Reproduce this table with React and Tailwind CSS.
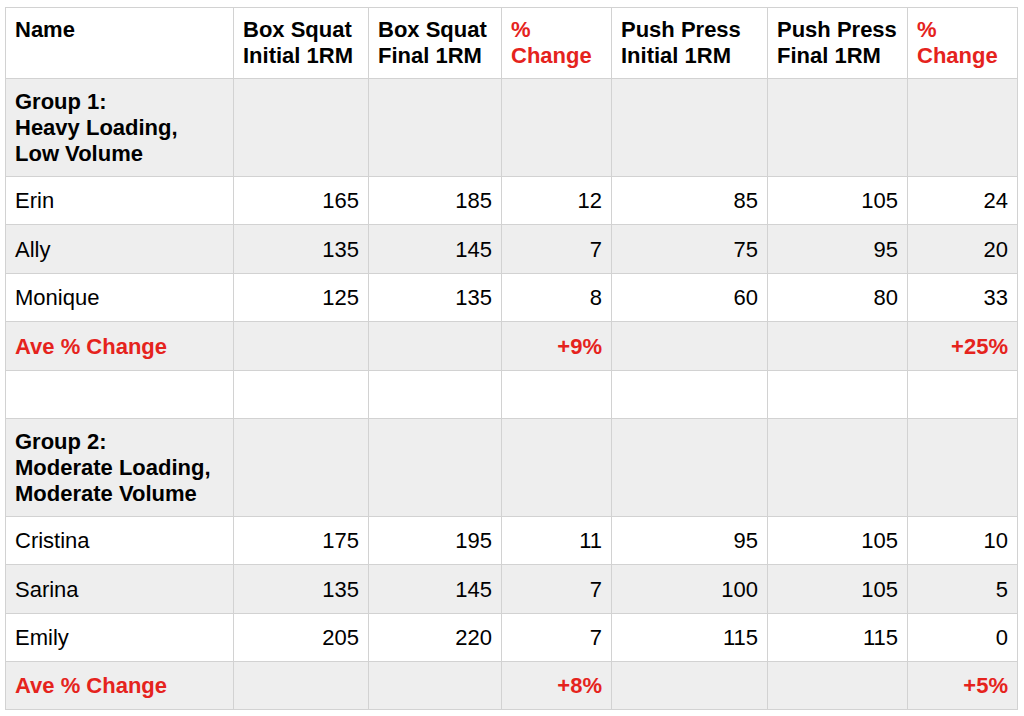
import React from "react";

const RED = "text-[#e5231d]";

const rows = [
  { type: "header" },
  { type: "group", label: ["Group 1:", "Heavy Loading,", "Low Volume"], bg: true },
  { type: "data", name: "Erin", v: ["165", "185", "12", "85", "105", "24"] },
  { type: "data", name: "Ally", v: ["135", "145", "7", "75", "95", "20"], bg: true },
  { type: "data", name: "Monique", v: ["125", "135", "8", "60", "80", "33"] },
  { type: "ave", v: ["", "", "+9%", "", "", "+25%"], bg: true },
  { type: "blank" },
  { type: "group", label: ["Group 2:", "Moderate Loading,", "Moderate Volume"], bg: true },
  { type: "data", name: "Cristina", v: ["175", "195", "11", "95", "105", "10"] },
  { type: "data", name: "Sarina", v: ["135", "145", "7", "100", "105", "5"], bg: true },
  { type: "data", name: "Emily", v: ["205", "220", "7", "115", "115", "0"] },
  { type: "ave", v: ["", "", "+8%", "", "", "+5%"], bg: true },
];

const headers = [
  { t: ["Name"], red: false },
  { t: ["Box Squat", "Initial 1RM"], red: false },
  { t: ["Box Squat", "Final 1RM"], red: false },
  { t: ["%", "Change"], red: true },
  { t: ["Push Press", "Initial 1RM"], red: false },
  { t: ["Push Press", "Final 1RM"], red: false },
  { t: ["%", "Change"], red: true },
];

const cellBase = "border-r border-b border-[#d2d2d2] px-[9px]";

export default function App() {
  const cells = [];
  rows.forEach((r, ri) => {
    const bg = r.bg ? "bg-[#eeeeee]" : "bg-white";
    if (r.type === "header") {
      headers.forEach((h, ci) => {
        cells.push(
          <div key={`${ri}-${ci}`} className={`${cellBase} ${bg} pt-[9px] font-bold leading-[26px] ${h.red ? RED : "text-black"}`}>
            {h.t.map((l, i) => (
              <div key={i} className="whitespace-nowrap">{l}</div>
            ))}
          </div>
        );
      });
    } else if (r.type === "group") {
      cells.push(
        <div key={`${ri}-0`} className={`${cellBase} ${bg} pt-[10px] font-bold leading-[26px] text-black`}>
          {r.label.map((l, i) => (
            <div key={i} className="whitespace-nowrap">{l}</div>
          ))}
        </div>
      );
      for (let c = 1; c < 7; c++) cells.push(<div key={`${ri}-${c}`} className={`${cellBase} ${bg}`} />);
    } else if (r.type === "data") {
      cells.push(
        <div key={`${ri}-0`} className={`${cellBase} ${bg} flex items-center text-black`}>{r.name}</div>
      );
      r.v.forEach((v, i) =>
        cells.push(
          <div key={`${ri}-${i + 1}`} className={`${cellBase} ${bg} flex items-center justify-end text-black`}>{v}</div>
        )
      );
    } else if (r.type === "ave") {
      cells.push(
        <div key={`${ri}-0`} className={`${cellBase} ${bg} flex items-center font-bold ${RED}`}>Ave % Change</div>
      );
      r.v.forEach((v, i) =>
        cells.push(
          <div key={`${ri}-${i + 1}`} className={`${cellBase} ${bg} flex items-center justify-end font-bold ${RED}`}>{v}</div>
        )
      );
    } else {
      for (let c = 0; c < 7; c++) cells.push(<div key={`${ri}-${c}`} className={`${cellBase} ${bg}`} />);
    }
  });

  return (
    <div
      className="w-[1024px] h-[716px] bg-white pt-[7px] pl-[5px]"
      style={{ fontFamily: '"Liberation Sans", Arial, sans-serif' }}
    >
      <div className="grid w-max border-l border-t border-[#d2d2d2] text-[22px] grid-cols-[228px_135px_133px_110px_156px_140px_110px] grid-rows-[71px_98px_48px_49px_48px_49px_48px_98px_48px_49px_48px_48px]">
        {cells}
      </div>
    </div>
  );
}
